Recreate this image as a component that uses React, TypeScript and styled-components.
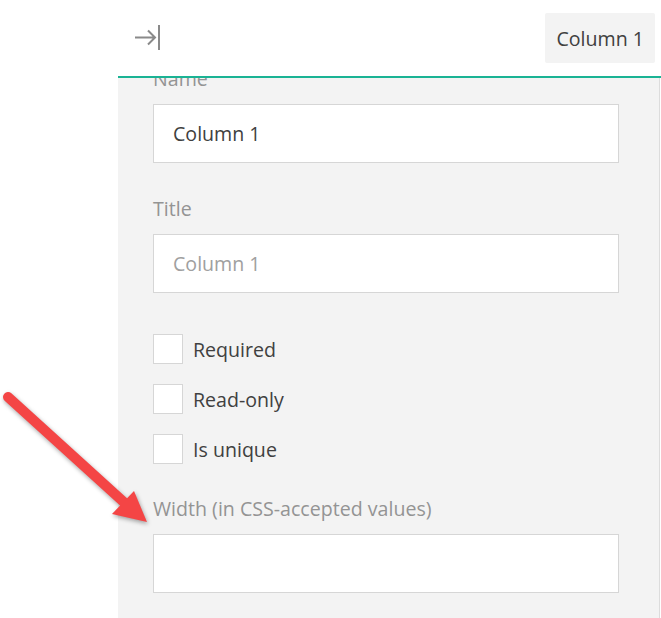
import React from "react";
import styled, { createGlobalStyle } from "styled-components";

const Global = createGlobalStyle`
  html, body { margin: 0; padding: 0; background: #ffffff; }
  body { font-family: "Open Sans", "Liberation Sans", sans-serif; }
  * { box-sizing: border-box; }
`;

const Page = styled.div`
  position: relative;
  width: 661px;
  height: 618px;
  overflow: hidden;
  padding-left: 118px;
  display: flex;
`;

const Sidebar = styled.div`
  width: 543px;
  height: 618px;
  display: flex;
  flex-direction: column;
`;

const Header = styled.div`
  height: 78px;
  flex: 0 0 auto;
  display: flex;
  align-items: center;
  justify-content: space-between;
  padding: 0 6px 0 16px;
  border-bottom: 2px solid #1ab394;
  background: #ffffff;
`;

const IconButton = styled.div`
  width: 28px;
  height: 28px;
  display: flex;
  align-items: center;
  justify-content: center;
`;

const Tab = styled.div`
  height: 50px;
  padding: 0 11px;
  display: flex;
  align-items: center;
  background: #f3f3f3;
  border-radius: 2px;
  color: #404040;
  font-size: 19.6px;
`;

const Body = styled.div`
  flex: 1;
  overflow: hidden;
  background: #f3f3f3;
  border-right: 1px solid #dcdcdc;
  width: 542px;
`;

const Content = styled.div`
  margin-top: -12px;
  padding: 0 40px 0 35px;
  display: flex;
  flex-direction: column;
`;

const Field = styled.div<{ $top: number }>`
  display: flex;
  flex-direction: column;
  margin-top: ${(p) => p.$top}px;
`;

const Label = styled.div`
  font-size: 19.6px;
  line-height: 26px;
  color: #949494;
  margin-bottom: 12px;
`;

const TextBox = styled.div<{ $placeholder?: boolean }>`
  height: 59px;
  background: #ffffff;
  border: 1px solid #d6d6d6;
  padding: 0 19px;
  display: flex;
  align-items: center;
  font-size: 19.6px;
  color: ${(p) => (p.$placeholder ? "#a0a0a0" : "#404040")};
`;

const Checks = styled.div`
  margin-top: 41px;
  display: flex;
  flex-direction: column;
  gap: 20px;
`;

const CheckRow = styled.div`
  display: flex;
  align-items: center;
  height: 30px;
  gap: 10px;
  font-size: 19.6px;
  color: #404040;
`;

const Box = styled.div`
  width: 30px;
  height: 30px;
  background: #ffffff;
  border: 1px solid #d6d6d6;
`;

const ArrowLayer = styled.svg`
  position: absolute;
  left: 0;
  top: 380px;
  width: 170px;
  height: 160px;
  overflow: visible;
  filter: drop-shadow(1px 2px 2px rgba(0, 0, 0, 0.35));
`;

export default function App() {
  return (
    <>
      <Global />
      <Page>
        <Sidebar>
          <Header>
            <IconButton>
              <svg width="28" height="28" viewBox="0 0 28 28">
                <path
                  d="M1 13.5 H21 M14 6.5 L21 13.5 L14 20.5"
                  stroke="#8a8a8a"
                  strokeWidth="2"
                  fill="none"
                />
                <path d="M25 1 V26" stroke="#8a8a8a" strokeWidth="2" />
              </svg>
            </IconButton>
            <Tab>Column 1</Tab>
          </Header>
          <Body>
            <Content>
              <Field $top={0}>
                <Label>Name</Label>
                <TextBox>Column 1</TextBox>
              </Field>
              <Field $top={33}>
                <Label>Title</Label>
                <TextBox $placeholder>Column 1</TextBox>
              </Field>
              <Checks>
                <CheckRow>
                  <Box />
                  Required
                </CheckRow>
                <CheckRow>
                  <Box />
                  Read-only
                </CheckRow>
                <CheckRow>
                  <Box />
                  Is unique
                </CheckRow>
              </Checks>
              <Field $top={32}>
                <Label>Width (in CSS-accepted values)</Label>
                <TextBox />
              </Field>
            </Content>
          </Body>
        </Sidebar>
        <ArrowLayer viewBox="0 380 170 160">
          <line
            x1="8"
            y1="397"
            x2="127"
            y2="505"
            stroke="#f44545"
            strokeWidth="10"
            strokeLinecap="round"
          />
          <polygon points="147,522 112,514 134,491" fill="#f44545" />
        </ArrowLayer>
      </Page>
    </>
  );
}
